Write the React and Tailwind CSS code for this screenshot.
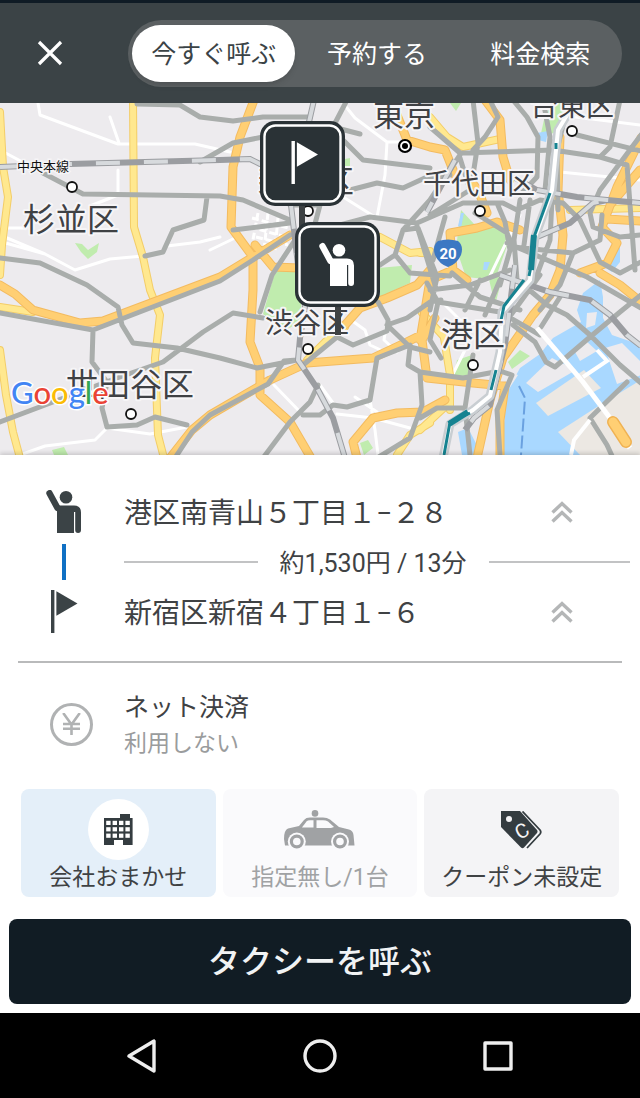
import { useState } from "react";

const TABS = ["今すぐ呼ぶ", "予約する", "料金検索"];

const WHITE_ROADS = [
  "M38 103 L40 115 L118 144 L195 144 L230 152",
  "M110 117 L119 143",
  "M0 150 L30 166",
  "M118 170 L118 195 L90 206",
  "M0 228 L25 228 M0 235 L45 254 L75 270 L110 259 L143 256",
  "M2 242 L45 254",
  "M167 246 L200 242 L220 237",
  "M210 250 L235 238",
  "M20 455 L45 446 L95 440 L107 428 L150 434 L187 427",
  "M274 385 L303 415 M337 414 L373 418 L410 428",
  "M320 385 L333 403 M355 397 L377 412",
  "M387 142 L385 175 L377 217",
  "M343 103 L355 118 L387 142 L420 142",
  "M340 195 L375 217",
  "M351 320 L365 330 L370 345 L385 352",
  "M377 300 L387 320 L384 340 L397 352",
  "M370 400 L375 430 L378 455",
  "M560 172 L640 180 M560 115 L640 125",
  "M488 280 L505 245 L520 215",
  "M440 300 L460 320 L500 330",
  "M450 380 L465 350 L470 330",
];

const YELLOW_ROADS = [
  "M0 112 L3 167 L8 197 L2 245 L0 275",
  "M133 100 L134 227 L143 257 L150 290 L160 315 L155 358 L158 435 L164 458",
  "M0 350 L6 395 L13 432 L20 458",
  "M0 307 L33 312",
  "M307 360 L325 342 L345 327",
  "M380 237 L410 253 L430 251",
  "M430 117 L447 137 L463 147 L500 139",
  "M420 253 L450 254",
  "M444 338 L450 375 L450 410",
  "M420 430 L447 405",
  "M397 455 L410 435 L430 423",
  "M570 210 L640 208",
  "M422 313 L445 338",
];

const ORANGE_ROADS = [
  "M0 285 L15 294 L33 310 L80 323 L103 321 L220 277 L253 257 L290 235",
  "M254 100 L240 137 L233 167 L231 227 L253 257 L253 290 L250 342 L260 368 L260 395 L290 422 L311 458",
  "M255 245 L273 267 L300 268",
  "M170 458 L192 430 L210 415 L270 380 L307 363 L373 358 L407 342 L421 335",
  "M357 458 L353 442 L373 418 L397 413 L423 412 L445 400",
  "M345 325 L360 308 L387 298 L417 285 L430 270",
  "M397 115 L407 140 L430 147 L445 150 L455 175",
  "M485 100 L500 120 L503 157 L510 180",
  "M470 180 L478 190 L487 213",
  "M520 230 L497 222 L477 228 L450 233 L453 270 L467 280",
  "M453 270 L430 280 L425 310 L420 340",
  "M560 137 L558 190 L563 235 L560 270 L550 295 L533 315 L503 358 L490 400 L477 458",
  "M641 138 L617 187 L602 227 L617 243 L607 263 L580 273",
  "M607 219 L641 221 M640 170 L610 205",
  "M600 273 L620 285 L641 302",
  "M427 378 L473 383 L505 386",
  "M427 378 L422 340 L435 318",
  "M505 386 L500 420 L500 455",
];

const GRAY_ROADS = [
  "M43 173 L83 194 L220 196 L243 200 L290 220",
  "M207 197 L204 220 L173 230 L163 252 L145 256",
  "M137 104 L180 105 L200 117 L233 121 L263 117 L310 117",
  "M200 162 L233 143 L263 137",
  "M0 258 L40 263 L87 285 L118 307 L122 325 L133 343 L177 348 L220 358 L257 368 L297 360",
  "M0 313 L93 330 L220 281 L253 260 L290 235",
  "M93 330 L92 362 L107 382 L102 408 L107 427 L137 425 L155 417 L187 425",
  "M0 422 L53 402 L117 378 L163 362 L203 332 L233 313 L263 318",
  "M175 458 L192 432 L210 415 L268 384 L284 361 L297 360",
  "M233 230 L290 223",
  "M263 458 L290 422 L310 402 L318 385",
  "M303 415 L320 415 L333 405 L347 407 L370 400 L377 358 L410 345",
  "M295 240 L272 275 L260 312",
  "M290 205 L320 205 L312 235",
  "M343 140 L363 160 L430 168",
  "M350 190 L377 183 L403 188 L427 177 L450 175",
  "M340 225 L370 217 L417 223 L463 203 L503 203 L517 210 L540 200",
  "M347 100 L333 127 L360 134",
  "M380 265 L395 255 L403 230 L430 200 L460 155",
  "M403 230 L418 228 L437 277 L430 310",
  "M417 226 L435 285 M445 217 L433 260",
  "M397 257 L410 273 L450 276",
  "M303 365 L337 337 L353 345 L387 331 L388 320 L378 302",
  "M387 325 L407 318 L430 302 L441 300",
  "M387 325 L410 347 L430 352",
  "M410 347 L408 365 L420 372 L422 405 L410 438 L377 458",
  "M473 100 L478 143 L473 175",
  "M490 100 L498 117 L485 137 L473 150",
  "M430 127 L460 153 L553 150 L600 157 L627 165 L635 270",
  "M513 100 L527 117 L538 137 L537 177 L520 195",
  "M543 100 L550 137 L545 190",
  "M555 140 L550 240 L535 280",
  "M568 105 L557 150 L558 210",
  "M577 135 L641 151",
  "M620 100 L610 147 L600 157",
  "M641 135 L600 190 L590 213 L593 227 L620 237 L641 235",
  "M475 213 L507 233 L513 247 L573 253 L600 240 L602 215",
  "M497 203 L505 222 L510 250 L500 285",
  "M520 200 L514 240 M530 200 L524 245 M514 240 L517 280",
  "M540 200 L563 203 L580 220 L600 262 L620 273 L641 262",
  "M507 243 L587 277 L641 308",
  "M573 253 L560 285 L540 310",
  "M460 158 L470 190 L430 215",
  "M427 283 L438 302 L430 340 L441 358",
  "M438 302 L500 312 L540 335",
  "M452 273 L480 297 L520 310",
  "M430 290 L470 285 L510 270",
  "M465 310 L480 280 M485 315 L500 280 M500 330 L540 275",
  "M420 372 L463 378 L500 371 L512 375 L497 410 L500 455",
  "M473 355 L465 408 L470 455",
  "M420 418 L437 408 L465 408",
  "M520 282 L547 305 L567 315 L590 335 L620 365 L641 383",
  "M641 295 L620 312 L590 337 L555 367 L546 362 L535 342 L513 325",
  "M560 297 L541 327",
  "M627 382 L590 418 L607 445 L613 458",
];

const RAILS = [
  "M0 167 L70 164 L220 160 L250 159 L262 165",
  "M314 100 L309 122 M291 205 L298 265",
  "M306 300 L300 338 L298 360 L317 388 L333 418 L345 458",
  "M537 190 L577 197 L607 200 L641 203",
  "M537 237 L570 223 L593 203 L607 200",
  "M500 275 L520 282 L550 292 L590 300 L610 315 L627 335 L641 346",
  "M455 160 L427 212",
  "M510 175 L537 190",
  "M515 265 L505 345 L490 405 L474 418 L465 430",
];

const RIVER =
  "M576 100 L558 130 L552 190 L535 237 L530 280 L502 312 L500 352 L490 396 L473 410 L450 424 L443 458";

const PLACES = [
  { name: "東京", x: 373, y: 126, size: 31 },
  { name: "台東区", x: 530, y: 116, size: 28, dot: [572, 131] },
  { name: "新宿区", x: 258, y: 193, size: 32, dot: [308, 211] },
  { name: "杉並区", x: 23, y: 231, size: 32, dot: [72, 187] },
  { name: "千代田区", x: 423, y: 194, size: 28, dot: [480, 211] },
  { name: "渋谷区", x: 265, y: 333, size: 28, dot: [308, 349] },
  { name: "港区", x: 441, y: 346, size: 32, dot: [473, 365] },
  { name: "世田谷区", x: 66, y: 396, size: 32, dot: [131, 414] },
];

function PersonShape() {
  return (
    <g fill="currentColor">
      <circle cx="20" cy="7.3" r="6.3" />
      <path d="M3.5 3.2 L11.5 18" stroke="currentColor" strokeWidth="6.4" strokeLinecap="round" />
      <path d="M9 15.5 H28 Q35 15.5 35 22.5 V40 A2.9 2.9 0 0 1 29.2 40 V22 H28 V43 H11 V20 Z" />
    </g>
  );
}

function FlagShape() {
  return (
    <g fill="currentColor">
      <rect x="0" y="0" width="3.4" height="43" />
      <path d="M5.4 1.2 L26.5 13.4 L5.4 25.8 Z" />
    </g>
  );
}

function MapMarker({ x, y, children }) {
  return (
    <g transform={`translate(${x} ${y})`}>
      <rect x="0" y="0" width="85" height="85" rx="15" fill="#2a3236" />
      <rect x="4.5" y="4.5" width="76" height="76" rx="11" fill="none" stroke="#fff" strokeWidth="2.4" />
      {children}
    </g>
  );
}

function RoadLayer({ roads, casing, color, width }) {
  return (
    <g fill="none" strokeLinejoin="round" strokeLinecap="round">
      {casing ? (
        <path d={roads.join(" ")} stroke={casing} strokeWidth={width + 2} />
      ) : null}
      <path d={roads.join(" ")} stroke={color} strokeWidth={width} />
    </g>
  );
}

function TokyoMap() {
  return (
    <svg
      viewBox="0 103 640 352"
      preserveAspectRatio="xMidYMid slice"
      role="img"
      aria-label="地図"
      className="block h-[352px] w-full bg-[#edebee] font-['Roboto','Noto_Sans_CJK_JP',sans-serif]"
    >
      {/* parks */}
      <g fill="#c0ecae">
        <path d="M276 268 L300 272 L302 322 L285 330 L263 314 Z" />
        <path d="M378 268 L412 265 L410 283 L380 297 Z" />
        <path d="M461 210 L475 225 L500 227 L509 240 L495 280 L466 277 L456 248 Z" />
        <path d="M553 103 L570 103 L556 132 L540 138 L545 115 Z" />
        <path d="M450 103 L461 103 L456 111 Z M488 275 L503 275 L495 305 Z" />
        <path d="M75 243 L82 244 L88 250 L99 243 L97 252 L88 259 L81 252 Z" />
        <path d="M52 450 L64 447 L68 455 L54 455 Z" />
        <path d="M457 360 L472 355 L468 378 L454 377 Z M508 362 L520 350 L530 356 L512 369 Z" />
        <path d="M360 443 L368 440 L373 448 L364 455 Z M340 160 L350 158 L350 166 L340 168 Z" />
      </g>

      {/* bay, canals and reclaimed land */}
      <g fill="#a9d8ff">
        <path d="M600 280 L583 293 L577 310 L581 322 L553 338 L540 354 L520 368 L507 392 L500 455 L641 455 L641 345 L612 335 L603 318 L603 297 Z" />
        <path d="M610 253 L620 247 L620 262 L612 272 L606 268 Z M537 133 L548 131 L546 142 L538 140 Z" />
        <path d="M461 213 L464 213 L461 228 L458 226 Z M484 262 L490 262 L487 270 L483 270 Z M458 432 L468 428 L482 455 L462 455 Z" />
      </g>
      <path d="M603 290 L641 308 L641 340 L615 330 Z M587 313 L597 312 L595 325 L586 328 Z" fill="#edebee" />
      <path d="M526 383 L552 358 L576 370 L538 392 Z" fill="#edebee" />
      <path d="M585 340 L597 351 L580 361 L575 352 Z M605 348 L622 343 L641 362 L641 375 L617 384 Z" fill="#edebee" />
      <path d="M536 403 L584 370 L601 388 L548 416 Z" fill="#ece8e3" />
      <path d="M558 432 L600 405 L641 380 L641 455 L580 455 Z" fill="#ece8e3" />
      <path d="M505 370 L518 375 L507 392 L501 455 L495 455 L497 400 Z" fill="#edebee" />
      <path d="M519 386 L525 398 L521 455" fill="none" stroke="#6aa1e0" strokeWidth="2" strokeDasharray="13 4" />

      <RoadLayer roads={WHITE_ROADS} color="#ffffff" width={3} />
      {/* small street grid west of Shinjuku */}
      <g stroke="#fff" strokeWidth="3" strokeDasharray="7 3">
        <path d="M252 218 L288 228 M250 227 L286 237 M256 237 L288 245 M258 213 L252 245 M268 213 L264 250 M278 218 L275 250" />
      </g>

      <RoadLayer roads={YELLOW_ROADS} casing="#f3cd68" color="#ffe88f" width={6} />
      <RoadLayer roads={ORANGE_ROADS} casing="#f3bb60" color="#ffcf73" width={7} />
      <RoadLayer roads={GRAY_ROADS} color="#a9adab" width={5} />

      <g fill="none">
        <path d={RAILS.join(" ")} stroke="#9b9da1" strokeWidth="6" />
        <path d={RAILS.join(" ")} stroke="#d7dadd" strokeWidth="4" strokeDasharray="24 24" />
      </g>

      {/* river with the rail line beside it */}
      <g fill="none" strokeLinejoin="round">
        <path d={RIVER} stroke="#c9ced2" strokeWidth="9" />
        <path d={RIVER} stroke="#fff" strokeWidth="4" />
        <path d="M572 103 L564 116 M556 143 L556 149 M550 193 L534 237 L533 257 L529 276 M524 280 L504 306 L500 325 M496 370 L491 390 M470 413 L450 422 L444 455" stroke="#168391" strokeWidth="3" />
        <path d="M534 235 L531 270 M468 412 L449 424" stroke="#168391" strokeWidth="6" />
      </g>

      {/* bridge over the bay */}
      <path d="M537 328 L583 382 L610 418 L630 448" fill="none" stroke="#fff" strokeWidth="5" />
      <path d="M583 377 L607 361 L597 350 M590 420 L574 440 L571 455" fill="none" stroke="#fff" strokeWidth="4" />
      <path d="M613 422 L626 442" stroke="#f0b252" strokeWidth="12" strokeLinecap="round" />
      <path d="M613 422 L626 442" stroke="#ffcf73" strokeWidth="9" strokeLinecap="round" />

      {/* route shield */}
      <path d="M438 241 Q448 238 458 241 Q464 246 461 255 Q457 264 448 267 Q439 264 435 255 Q432 246 438 241 Z" fill="#3c78c3" />
      <text x="448" y="259" textAnchor="middle" fontSize="15" fontWeight="700" fill="#fff">
        20
      </text>

      {PLACES.map((place) => (
        <g key={place.name}>
          <text
            x={place.x}
            y={place.y}
            fontSize={place.size}
            fill="#3f4144"
            stroke="#f6f5f7"
            strokeWidth="4"
            strokeLinejoin="round"
            paintOrder="stroke"
          >
            {place.name}
          </text>
          {place.dot ? (
            <circle cx={place.dot[0]} cy={place.dot[1]} r="5" fill="#fff" stroke="#111" strokeWidth="1.8" />
          ) : null}
        </g>
      ))}
      <circle cx="405" cy="146" r="6" fill="#fff" stroke="#000" strokeWidth="2.2" />
      <circle cx="405" cy="146" r="3" />
      <text x="17" y="171" fontSize="13" fill="#111" stroke="#f6f5f7" strokeWidth="3" paintOrder="stroke">
        中央本線
      </text>

      <text
        x="11"
        y="404"
        fontSize="31"
        stroke="#fff"
        strokeWidth="3"
        paintOrder="stroke"
        className="font-['Lato',sans-serif] font-medium"
      >
        <tspan fill="#4285f4">G</tspan>
        <tspan fill="#ea4335">o</tspan>
        <tspan fill="#fbbc05">o</tspan>
        <tspan fill="#4285f4">g</tspan>
        <tspan fill="#34a853">l</tspan>
        <tspan fill="#ea4335">e</tspan>
      </text>

      <rect x="299" y="200" width="6" height="40" fill="#3e4244" />
      <rect x="335" y="300" width="6" height="35" fill="#3e4244" />
      <MapMarker x={260} y={121}>
        <g transform="translate(31.5 20)" className="text-white">
          <FlagShape />
        </g>
      </MapMarker>
      <MapMarker x={295} y={222}>
        <g transform="translate(24 21)" className="text-white">
          <PersonShape />
        </g>
      </MapMarker>
    </svg>
  );
}

function ChevronsUp() {
  return (
    <svg viewBox="0 0 22 22" fill="none" stroke="#b4b6b7" strokeWidth="3.4" className="size-[22px]">
      <path d="M1.5 11.5 L11 2.5 L20.5 11.5 M1.5 20.5 L11 11.5 L20.5 20.5" />
    </svg>
  );
}

function AddressRow({ icon, address }) {
  return (
    <button type="button" className="flex h-14 w-full items-center pr-[67px] text-left">
      <span className="flex w-[124px] shrink-0 justify-center pl-1 text-[#3b4346]">{icon}</span>
      <span className="flex-1 pt-1 text-[28px] leading-9">{address}</span>
      <ChevronsUp />
    </button>
  );
}

function YenIcon() {
  return (
    <svg viewBox="0 0 19 22" fill="none" stroke="currentColor" strokeWidth="2.6" className="h-[22px] w-[19px]">
      <path d="M1.2 0 L9.5 11.5 L17.8 0 M9.5 10.5 V22 M1 11 H18 M1 15.8 H18" />
    </svg>
  );
}

function BuildingIcon() {
  return (
    <svg viewBox="0 0 29 31" className="h-[31px] w-[29px]">
      <path d="M16 0 H26 V4 H28.6 V31 H19 V26 H10 V31 H0 V4 H16 Z" fill="#343c40" />
      {[6.8, 13.2, 19.6].map((y) =>
        [2.2, 8.6, 15, 21.4].map((x) => (
          <rect key={`${x}-${y}`} x={x} y={y} width="4.4" height="4.2" fill="#fff" />
        ))
      )}
    </svg>
  );
}

function TaxiIcon() {
  return (
    <svg viewBox="0 0 71 39" className="h-[39px] w-[71px]">
      <circle cx="31" cy="3.4" r="3.3" fill="#a0a2a4" />
      <path
        d="M0 29 Q0 20 4 18.5 L15 16 L20 10 Q22 7.6 26 7.6 H39 Q43 7.6 46 9.6 L55 17 L65 19.5 Q69 20.5 69.5 25 L70.5 35.5 H1 Z"
        fill="#a0a2a4"
      />
      <path d="M18.5 16.8 L22.5 11.6 Q23.6 10.2 26 10.2 H29.5 V17.6 H18 Z" fill="#fafafc" />
      <path d="M32.5 10.2 H39 Q42 10.2 44 11.6 L50 17 L47 18 H32.5 Z" fill="#fafafc" />
      <circle cx="12.8" cy="31.5" r="9" fill="#fafafc" />
      <circle cx="12.8" cy="31.5" r="5.4" fill="none" stroke="#a0a2a4" strokeWidth="3.2" />
      <circle cx="56" cy="31.5" r="9" fill="#fafafc" />
      <circle cx="56" cy="31.5" r="5.4" fill="none" stroke="#a0a2a4" strokeWidth="3.2" />
    </svg>
  );
}

function CouponIcon() {
  return (
    <svg viewBox="0 0 42 38" className="h-[38px] w-[42px]">
      <path d="M0 0 H19 L36 19 Q37 20.5 36 22 L23 36.5 Q21.5 38 20 36.5 L0 16 Z" fill="#343c40" />
      <path d="M21.5 .5 L39 19 Q40.5 21 39 23 L26 37" fill="none" stroke="#343c40" strokeWidth="1.8" />
      <circle cx="8" cy="8" r="3" fill="#f4f4f6" />
      <text
        x="21"
        y="27"
        textAnchor="middle"
        fontSize="20"
        fill="#f4f4f6"
        transform="rotate(-30 21 20)"
        className="font-['Roboto',sans-serif]"
      >
        C
      </text>
    </svg>
  );
}

export default function App() {
  const [activeTab, setActiveTab] = useState(TABS[0]);

  return (
    <div className="flex min-h-screen flex-col bg-white font-['Roboto','Noto_Sans_CJK_JP',sans-serif] text-[#3f4244]">
      <header className="flex h-[103px] items-center border-t-[3px] border-[#0f1b25] bg-[#3b4346] pr-[18px]">
        <div className="flex w-32 shrink-0 pl-[37px]">
          <button type="button" aria-label="閉じる">
            <svg viewBox="0 0 26 26" fill="none" stroke="#fff" strokeWidth="3.2" className="size-[26px]">
              <path d="M2 2 L24 24 M24 2 L2 24" />
            </svg>
          </button>
        </div>
        <div className="flex h-[67px] flex-1 rounded-full bg-[#5b6062] py-[5px] pl-1">
          {TABS.map((tab) => (
            <button
              key={tab}
              type="button"
              onClick={() => setActiveTab(tab)}
              className={
                tab === activeTab
                  ? "flex-1 rounded-full bg-white pt-1 text-[25px] leading-8 text-[#3b4346] shadow-md"
                  : "flex-1 rounded-full pt-1 text-[25px] leading-8 text-white"
              }
            >
              {tab}
            </button>
          ))}
        </div>
      </header>

      <TokyoMap />

      <main className="flex flex-1 flex-col shadow-[0_-2px_4px_rgba(0,0,0,0.15)]">
        <section className="pt-[29px]">
          <AddressRow
            address="港区南青山５丁目１−２８"
            icon={
              <svg viewBox="0 0 36 44" className="h-11 w-9">
                <PersonShape />
              </svg>
            }
          />
          <div className="flex h-11 items-center pr-[10px]">
            <div className="flex w-[124px] shrink-0 justify-center pl-1">
              <span className="h-9 w-1 bg-[#0f70c4]" />
            </div>
            <span className="h-[2px] flex-[17] bg-[#c2c3c4]" />
            <span className="px-[22px] pt-1 text-[25px] leading-8">約1,530円 / 13分</span>
            <span className="h-[2px] flex-[18] bg-[#c2c3c4]" />
          </div>
          <AddressRow
            address="新宿区新宿４丁目１−６"
            icon={
              <svg viewBox="0 0 27 44" className="h-11 w-[27px]">
                <FlagShape />
              </svg>
            }
          />
        </section>

        <hr className="mx-[18px] mt-[21px] border-t-2 border-[#b9babb]" />

        <button type="button" className="mt-[25px] flex items-center text-left">
          <span className="flex w-[124px] shrink-0 pl-[50px]">
            <span className="flex size-[43px] items-center justify-center rounded-full border-[3px] border-[#b0b2b3] text-[#b0b2b3]">
              <YenIcon />
            </span>
          </span>
          <span className="flex h-[72px] flex-col pt-[2px]">
            <span className="text-[25px] leading-9">ネット決済</span>
            <span className="text-[23px] leading-9 text-[#9a9c9d]">利用しない</span>
          </span>
        </button>

        <div className="mt-[29px] grid grid-cols-3 gap-[7px] px-[21px]">
          <button type="button" className="flex h-[108px] flex-col items-center rounded-lg bg-[#e4eff9] pt-[10px]">
            <span className="flex size-[61px] items-center justify-center rounded-full bg-white">
              <BuildingIcon />
            </span>
            <span className="text-[23px] leading-9">会社おまかせ</span>
          </button>
          <button
            type="button"
            disabled
            className="flex h-[108px] flex-col items-center rounded-lg bg-[#fafafc] pt-[10px] text-[#a0a2a4]"
          >
            <span className="flex h-[61px] items-center">
              <TaxiIcon />
            </span>
            <span className="text-[23px] leading-9">指定無し/1台</span>
          </button>
          <button type="button" className="flex h-[108px] flex-col items-center rounded-lg bg-[#f4f4f6] pt-[10px]">
            <span className="flex h-[61px] items-center">
              <CouponIcon />
            </span>
            <span className="text-[23px] leading-9">クーポン未設定</span>
          </button>
        </div>

        <div className="mt-[22px] px-[9px] pb-[9px]">
          <button
            type="button"
            className="h-[85px] w-full rounded-lg bg-[#111c24] text-[32px] font-medium text-[#f1f3f4]"
          >
            タクシーを呼ぶ
          </button>
        </div>
      </main>

      <nav className="flex h-[85px] items-center justify-center gap-36 bg-black">
        <button type="button" aria-label="戻る">
          <svg viewBox="0 0 34 34" fill="none" stroke="#eee" strokeWidth="3.4" strokeLinejoin="round" className="size-[34px]">
            <path d="M29 2 V32 L4 17 Z" />
          </svg>
        </button>
        <button type="button" aria-label="ホーム">
          <svg viewBox="0 0 34 34" fill="none" stroke="#eee" strokeWidth="3.4" className="size-[34px]">
            <circle cx="17" cy="17" r="15" />
          </svg>
        </button>
        <button type="button" aria-label="最近使ったアプリ">
          <svg viewBox="0 0 34 34" fill="none" stroke="#eee" strokeWidth="3.4" strokeLinejoin="round" className="size-[34px]">
            <rect x="4" y="4" width="26" height="26" />
          </svg>
        </button>
      </nav>
    </div>
  );
}
